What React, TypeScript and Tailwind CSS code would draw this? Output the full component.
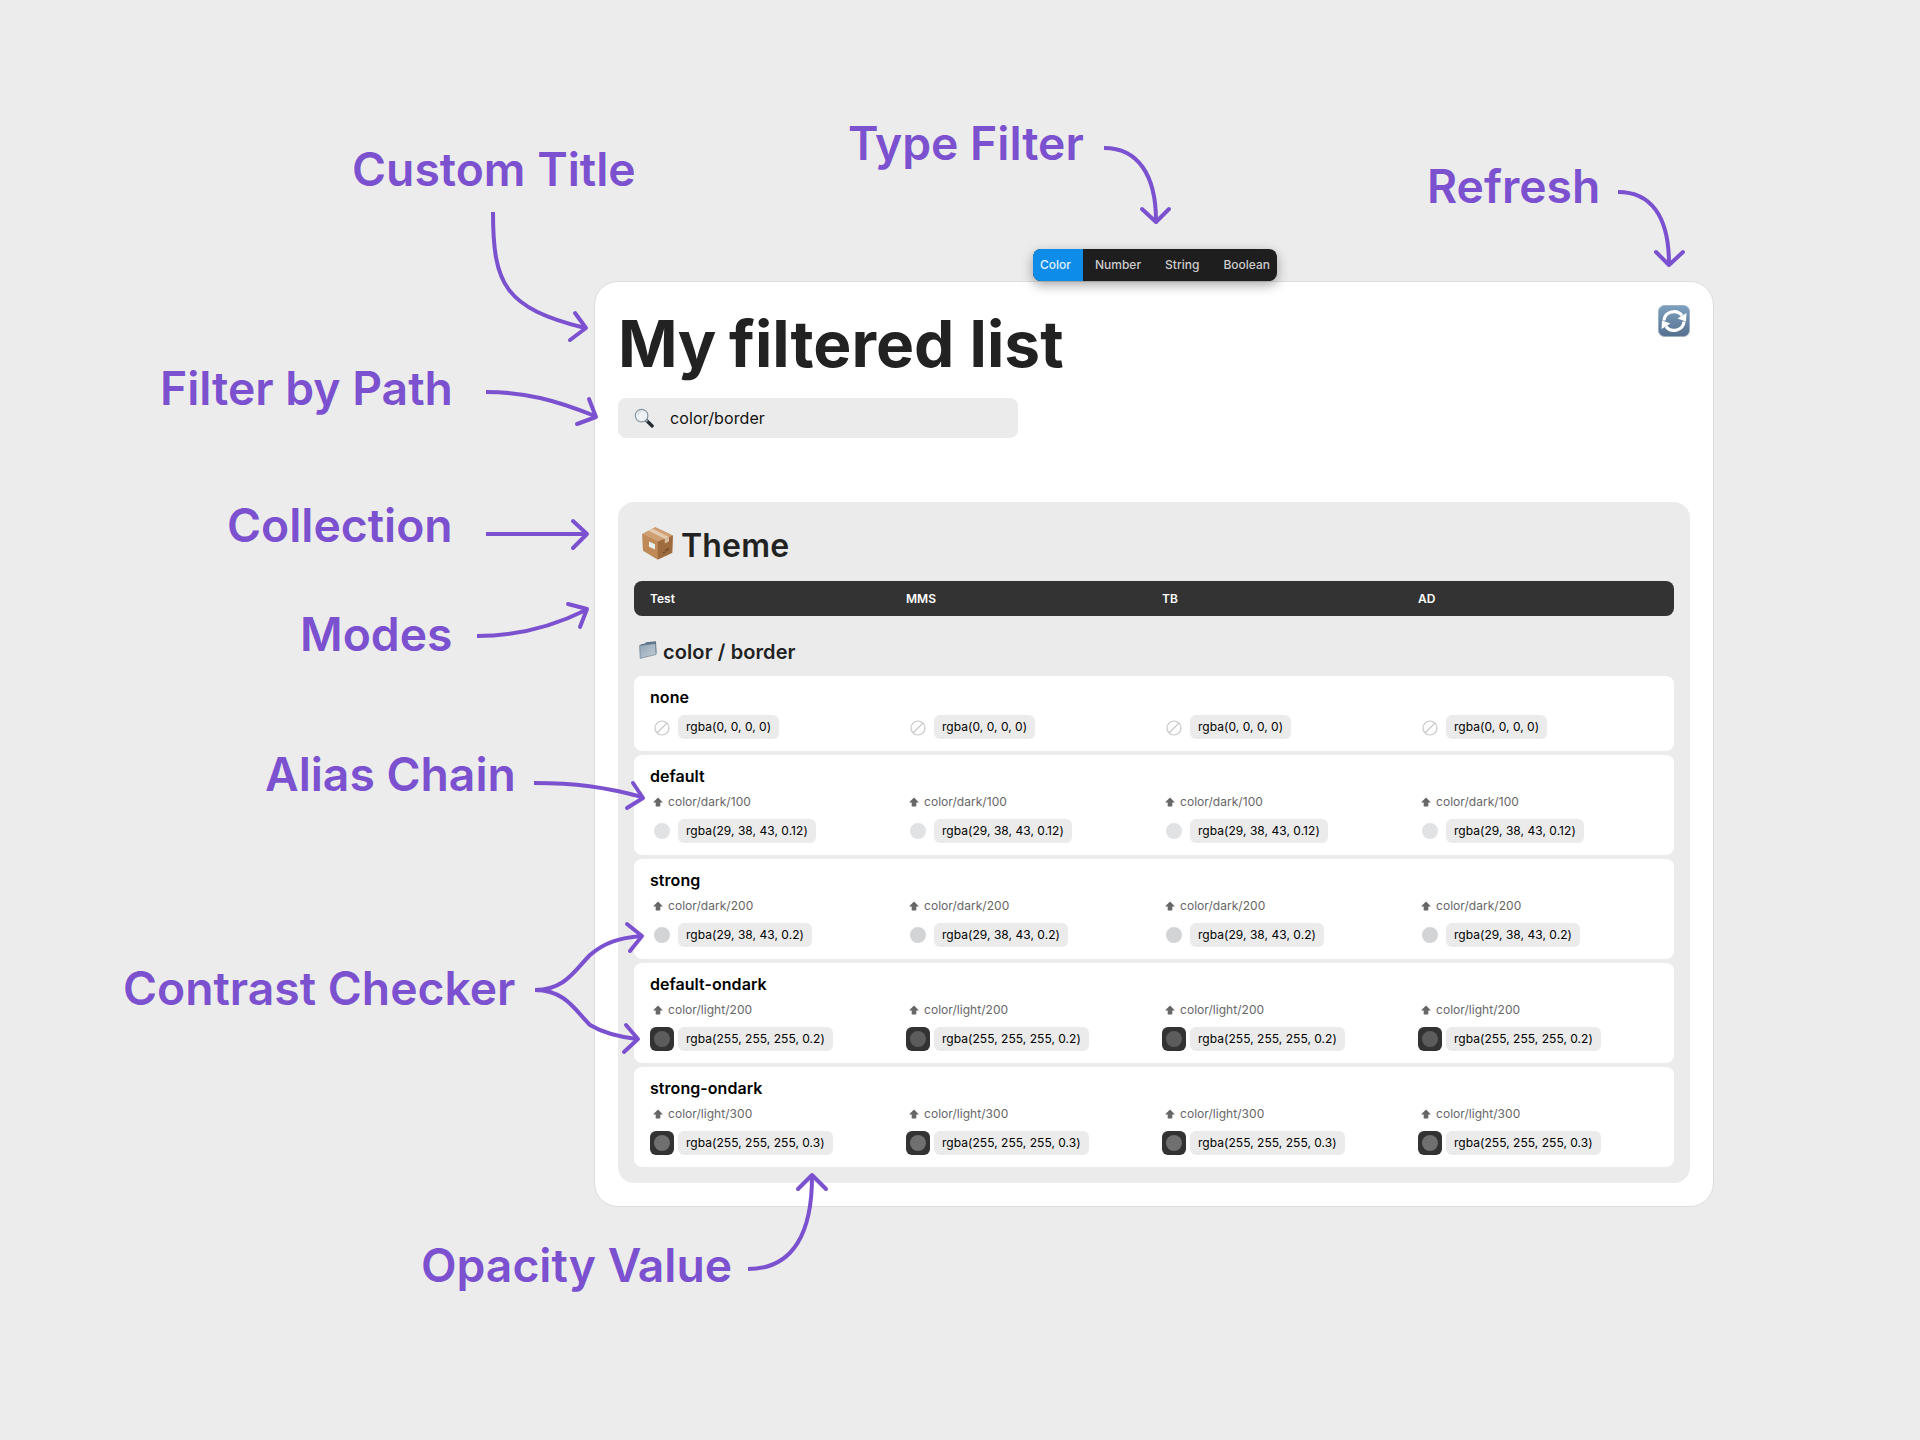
import React from "react";

const FONT = "font-['Inter','Liberation_Sans',sans-serif]";

function PackageEmoji() {
  return (
    <svg width="32" height="33" viewBox="0 0 32 33" className="block shrink-0 mb-[5px]">
      <path d="M0.4 7 L13.3 0.3 L30.8 8.5 L30.2 25.7 L15.8 32.6 L1 23.5 Z" fill="#b5804e" />
      <path d="M0.4 7 L15.8 14.5 L15.8 32.6 L1 23.5 Z" fill="#c08a58" />
      <path d="M15.8 14.5 L30.8 8.5 L30.2 25.7 L15.8 32.6 Z" fill="#9e6b3f" />
      <path d="M0.4 7 L13.3 0.3 L30.8 8.5 L15.8 14.5 Z" fill="#d0a074" />
      <path d="M6.5 3.8 L10.5 1.8 L27 9.9 L22.8 11.7 Z" fill="#e3cbb0" />
      <path d="M22.8 11.7 L27 9.9 L27 14.5 L22.8 16.5 Z" fill="#d8bd9f" />
      <path d="M7 14.5 L13 17.2 L13 22.5 L7 19.8 Z" fill="#e9eef2" />
      <path d="M21 26 L23 25 M24 24.5 L24 22 M26 23.5 L26 21" stroke="#5f3f22" strokeWidth="1" />
    </svg>
  );
}

function FolderEmoji() {
  return (
    <svg width="18" height="18" viewBox="0 0 18 18" className="block shrink-0 mb-1">
      <defs>
        <linearGradient id="folderG" x1="0" y1="0" x2="1" y2="1">
          <stop offset="0" stopColor="#8ea3b6" />
          <stop offset="1" stopColor="#c6ced6" />
        </linearGradient>
      </defs>
      <path d="M1.5 3.5 L6 2.5 L7 1.2 L17 0.2 L17.5 12.5 L2 14 Z" fill="#5d7388" />
      <path d="M0.6 4.5 L16.5 2.4 L17 13.5 L1.2 17.4 Z" fill="url(#folderG)" stroke="#60758a" strokeWidth="0.6" />
    </svg>
  );
}

function SearchEmoji() {
  return (
    <svg width="20" height="20" viewBox="0 0 20 20" className="block shrink-0">
      <path d="M12 12 L18.2 18" stroke="#222a30" strokeWidth="3.2" strokeLinecap="round" />
      <path d="M11.6 11.6 L13.4 13.4" stroke="#9aa4ac" strokeWidth="2.2" />
      <circle cx="7.6" cy="7.6" r="6.3" fill="#eef3f7" stroke="#8595a2" strokeWidth="1.2" />
      <path d="M3.6 7.2 A4.2 4.2 0 0 1 7.4 3.4" fill="none" stroke="#c5d0d8" strokeWidth="1" />
    </svg>
  );
}

function RefreshEmoji() {
  return (
    <svg width="32" height="32" viewBox="0 0 32 32" className="block shrink-0">
      <defs>
        <linearGradient id="refG" x1="0" y1="0" x2="0" y2="1">
          <stop offset="0" stopColor="#7da0bf" />
          <stop offset="1" stopColor="#55708e" />
        </linearGradient>
      </defs>
      <rect x="0.5" y="0.5" width="31" height="31" rx="6" fill="url(#refG)" stroke="#9db1c4" strokeWidth="1" />
      <path d="M6 15.5 A10 9.5 0 0 1 24 10.5" fill="none" stroke="#fff" strokeWidth="3.2" />
      <path d="M19.5 13.5 L28 16.5 L28.5 8 Z" fill="#fff" />
      <path d="M26 16.5 A10 9.5 0 0 1 8 21.5" fill="none" stroke="#fff" strokeWidth="3.2" />
      <path d="M12.5 18.5 L4 15.5 L3.5 24 Z" fill="#fff" />
    </svg>
  );
}

function UpArrow() {
  return (
    <svg width="10" height="10" viewBox="0 0 10 10" className="block shrink-0">
      <path d="M5 0.4 L10 5.4 L7.3 5.4 L7.3 9.6 L2.7 9.6 L2.7 5.4 L0 5.4 Z" fill="#666666" />
    </svg>
  );
}

function NoneIcon() {
  return (
    <div className="w-6 h-6 pt-[2px] flex items-center justify-center shrink-0">
      <svg width="16" height="16" viewBox="0 0 16 16" className="block">
        <circle cx="8" cy="8" r="7" fill="none" stroke="#c8c8c8" strokeWidth="1.2" />
        <path d="M3 13 L13 3" stroke="#c8c8c8" strokeWidth="1.2" />
      </svg>
    </div>
  );
}

function Swatch({ kind }: { kind: string }) {
  if (kind === "none") return <NoneIcon />;
  if (kind === "l12")
    return (
      <div className="w-6 h-6 flex items-center justify-center shrink-0">
        <div className="w-4 h-4 rounded-full bg-[#e1e2e3]" />
      </div>
    );
  if (kind === "l20")
    return (
      <div className="w-6 h-6 flex items-center justify-center shrink-0">
        <div className="w-4 h-4 rounded-full bg-[#d2d4d5]" />
      </div>
    );
  if (kind === "d20")
    return (
      <div className="w-6 h-6 rounded-md bg-[#333333] flex items-center justify-center shrink-0">
        <div className="w-4 h-4 rounded-full bg-[#5c5c5c]" />
      </div>
    );
  return (
    <div className="w-6 h-6 rounded-md bg-[#333333] flex items-center justify-center shrink-0">
      <div className="w-4 h-4 rounded-full bg-[#707070]" />
    </div>
  );
}

const ROWS = [
  { name: "none", alias: "", value: "rgba(0, 0, 0, 0)", kind: "none" },
  { name: "default", alias: "color/dark/100", value: "rgba(29, 38, 43, 0.12)", kind: "l12" },
  { name: "strong", alias: "color/dark/200", value: "rgba(29, 38, 43, 0.2)", kind: "l20" },
  { name: "default-ondark", alias: "color/light/200", value: "rgba(255, 255, 255, 0.2)", kind: "d20" },
  { name: "strong-ondark", alias: "color/light/300", value: "rgba(255, 255, 255, 0.3)", kind: "d30" },
];

function Row({ row }: { row: (typeof ROWS)[number] }) {
  return (
    <div className="bg-white rounded-lg pl-4 pt-3 pb-3">
      <div className="text-base leading-[19px] font-semibold text-black tracking-[0.05px]">{row.name}</div>
      <div className="grid grid-cols-4 mt-2">
        {[0, 1, 2, 3].map((i) => (
          <div key={i} className="flex flex-col gap-2">
            {row.alias && (
              <div className="flex items-center gap-[5px] pl-[3px] pb-[2px] h-[17px] text-xs text-[#666666] tracking-[0.04px]">
                <UpArrow />
                <span>{row.alias}</span>
              </div>
            )}
            <div className="flex items-center gap-1">
              <Swatch kind={row.kind} />
              <div className="h-6 px-2 rounded-md bg-[#ebebeb] flex items-center text-xs text-black tracking-[0.04px]">
                {row.value}
              </div>
            </div>
          </div>
        ))}
      </div>
    </div>
  );
}

function Label({ className, children }: { className: string; children: React.ReactNode }) {
  return (
    <div className={`absolute text-[46.25px] leading-[58px] font-semibold text-[#7b51d0] whitespace-nowrap ${className}`}>
      {children}
    </div>
  );
}

const ARROWS: [string, string][] = [
  ["M493 212 C493 285 505 308 585 328", "M575 313 L586 328 L570 340"],
  ["M486 392 C525 392 555 400 595 416", "M589 399 L596 417 L577 424"],
  ["M486 534 L586 534", "M573 521 L587 534 L573 548"],
  ["M477 636 C515 636 550 628 586 610", "M568 604 L587 609 L580 627"],
  ["M534 783 C575 783 605 787 642 797", "M633 783 L643 798 L627 808"],
  ["M535 990 C565 990 575 970 590 955 C605 942 620 938 641 936", "M627 924 L642 936 L630 951"],
  ["M535 990 C565 990 575 1010 590 1025 C605 1034 620 1037 637 1039", "M626 1025 L638 1039 L624 1052"],
  ["M1104 148 C1138 148 1156 175 1156 221", "M1142 209 L1156 222 L1169 209"],
  ["M1618 192 C1650 192 1669 215 1669 264", "M1656 252 L1669 265 L1683 252"],
  ["M748 1269 C795 1269 812 1230 812 1177", "M798 1189 L812 1175 L826 1189"],
];

export default function App() {
  return (
    <div className={`relative w-[1920px] h-[1440px] bg-[#ececec] overflow-hidden pt-[281px] pl-[594px] [font-kerning:normal] [text-rendering:optimizeLegibility] ${FONT}`}>
      {/* main card */}
      <div className="relative w-[1120px] h-[926px] bg-white border border-[#dddddd] rounded-3xl pt-[23px] px-[23px] text-[#222222]">
        <div className="absolute top-[23px] right-[23px]">
          <RefreshEmoji />
        </div>
        <h1 className="text-[64px] leading-[77px] font-bold text-[#222222]">
          M<span className="tracking-[-2.4px]">y</span> filtered list
        </h1>
        <div className="mt-4 w-[400px] h-10 bg-[#ebebeb] rounded-lg flex items-center pl-4 text-base text-[#111111] tracking-[0.1px]">
          <SearchEmoji />
          <span className="ml-4">color/border</span>
        </div>

        <div className="mt-16 bg-[#ebebeb] rounded-2xl px-4 pt-6 pb-4">
          <div className="flex items-center h-[39px] pl-2 gap-[7px] text-[32px] font-semibold text-[#222222] tracking-[0.2px]">
            <PackageEmoji />
            <span>Theme</span>
          </div>
          <div className="mt-4 h-[35px] bg-[#333333] rounded-lg pl-4 grid grid-cols-4 items-center text-xs font-semibold text-white">
            <span>Test</span>
            <span>MMS</span>
            <span>TB</span>
            <span>AD</span>
          </div>
          <div className="mt-6 mb-3 h-6 flex items-center pl-[5px] gap-1.5 text-xl font-semibold text-[#222222] tracking-[0.1px]">
            <FolderEmoji />
            <span>color / border</span>
          </div>
          <div className="flex flex-col gap-1">
            {ROWS.map((r) => (
              <Row key={r.name} row={r} />
            ))}
          </div>
        </div>
      </div>

      {/* type filter toolbar */}
      <div className="absolute left-[1033px] top-[249px] h-8 w-[244px] flex items-center rounded-lg bg-[#1e1e1e] shadow-[0_4px_12px_rgba(0,0,0,0.35)] text-xs font-medium text-[#cccccc] overflow-hidden">
        <div className="h-full w-[50px] pl-[7px] bg-[#0d8ce9] text-[#e6f3fd] flex items-center">Color</div>
        <span className="ml-[12px]">Number</span>
        <span className="ml-6">String</span>
        <span className="ml-6">Boolean</span>
      </div>

      {/* annotations */}
      <Label className="left-[352px] top-[140px]">Custom Title</Label>
      <Label className="left-[848px] top-[114px]">
        <span className="tracking-[-3.5px]">T</span>ype Filter
      </Label>
      <Label className="left-[1427px] top-[157px]">Refresh</Label>
      <Label className="left-[160px] top-[359px]">Filter by Path</Label>
      <Label className="left-[227px] top-[496px]">Collection</Label>
      <Label className="left-[300px] top-[605px]">Modes</Label>
      <Label className="left-[265px] top-[745px]">Alias Chain</Label>
      <Label className="left-[123px] top-[959px]">Contrast Checker</Label>
      <Label className="left-[421px] top-[1236px]">
        Opacity <span className="tracking-[-3.5px]">V</span>alue
      </Label>

      <svg width="1920" height="1440" viewBox="0 0 1920 1440" className="absolute left-0 top-0 pointer-events-none" fill="none">
        {ARROWS.map(([shaft, head]) => (
          <g key={shaft} stroke="#7b51d0" strokeWidth="4">
            <path d={shaft} />
            <path d={head} strokeLinecap="round" strokeLinejoin="round" />
          </g>
        ))}
      </svg>
    </div>
  );
}
